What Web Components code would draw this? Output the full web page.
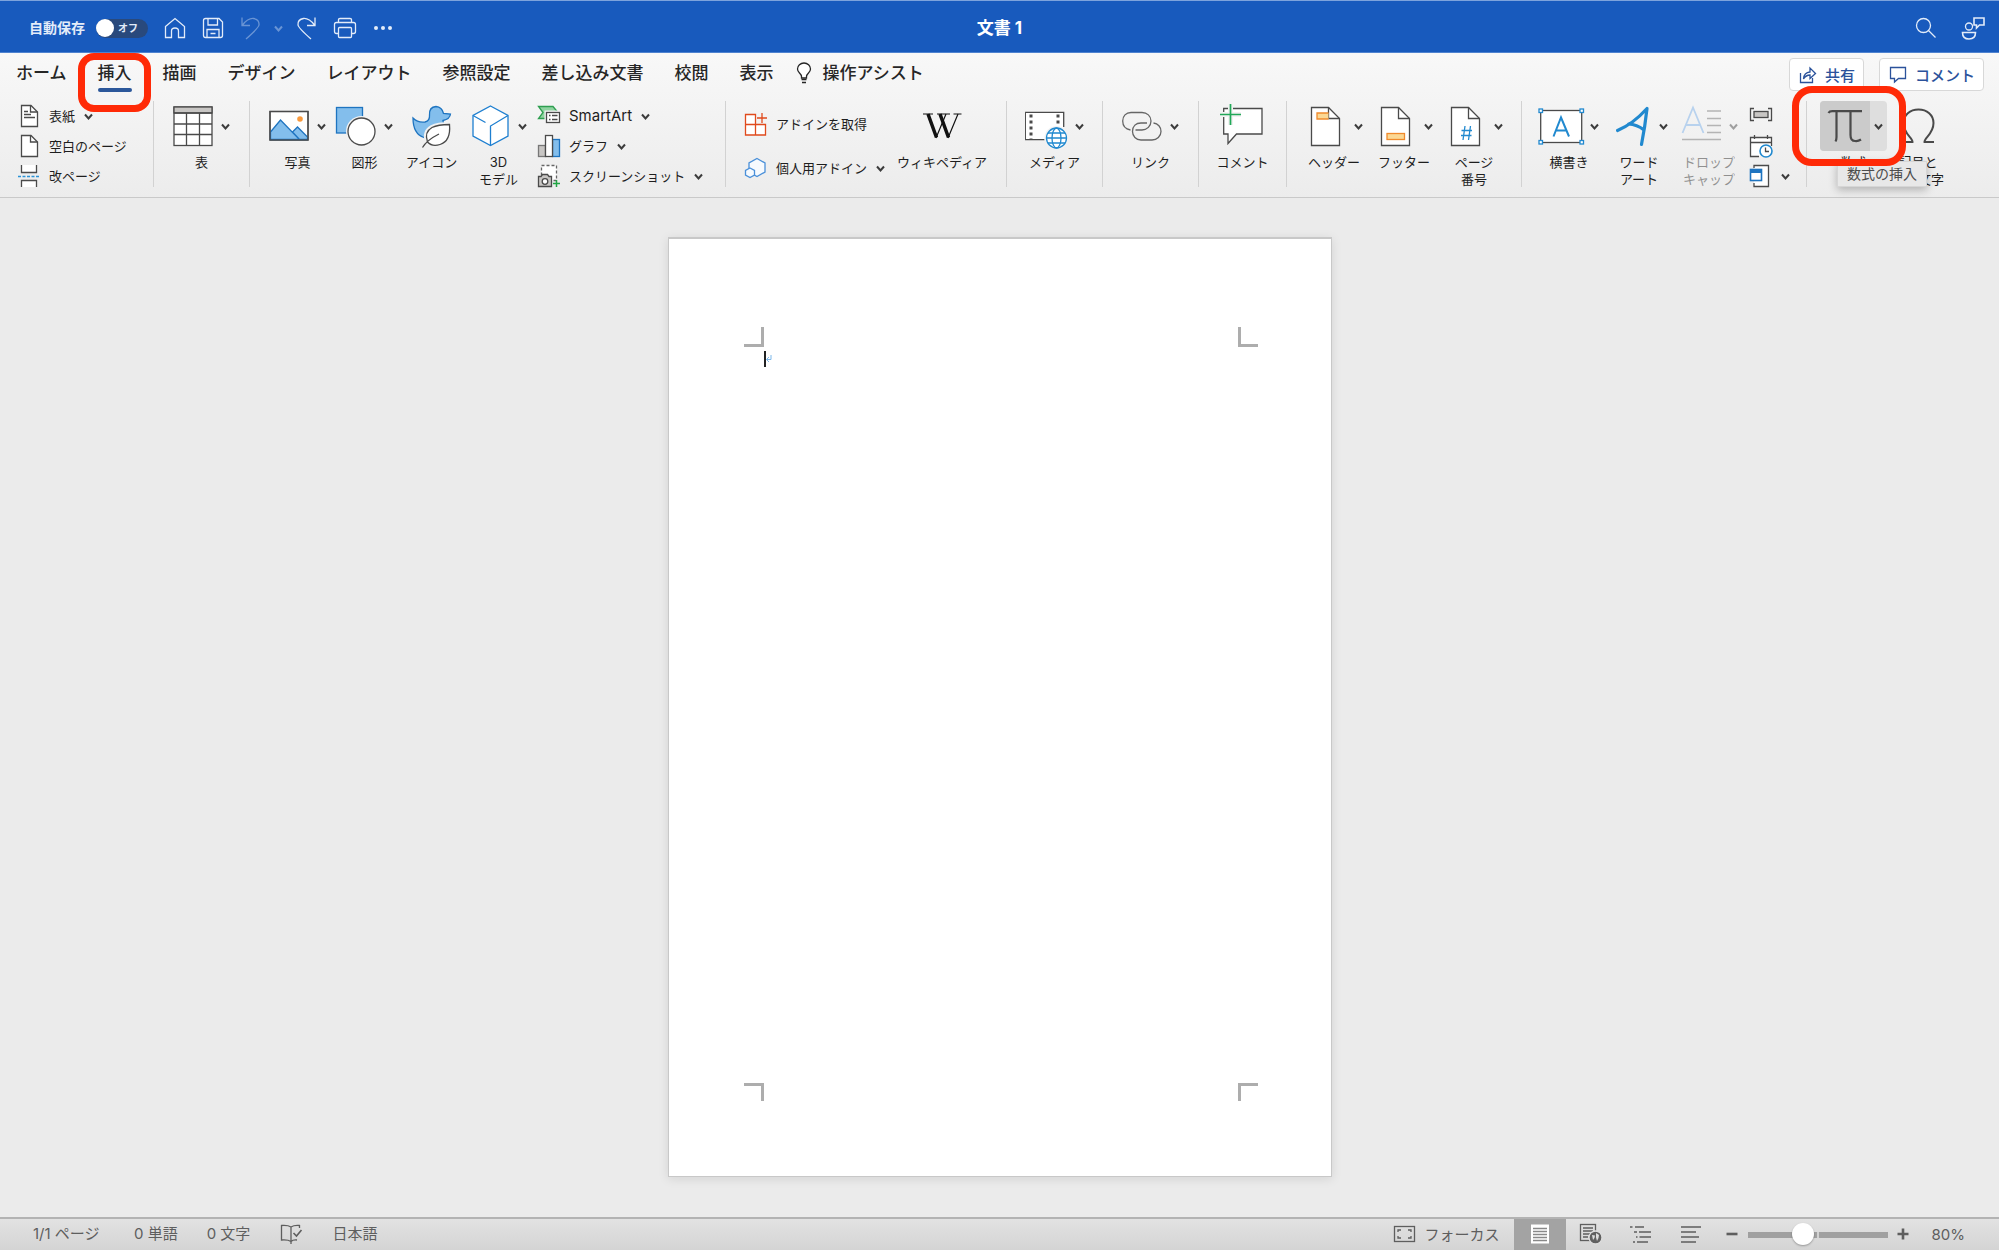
<!DOCTYPE html>
<html lang="ja">
<head>
<meta charset="utf-8">
<title>文書 1</title>
<style>
html,body{margin:0;height:100%}
body{font-family:Inter,"Noto Sans CJK JP",sans-serif;font-size:13px;color:#262626;background:#ebebeb}
</style>
</head>
<body>
<word-app></word-app>
<script>
const page='<path d="M5.5 2.5H22.5L33.5 13.5V40.5H5.5Z" fill="#fff" stroke="#4a4a4a"/><path d="M22.5 2.5V13.5H33.5" fill="none" stroke="#4a4a4a"/>';
const ICONS={
home:[22,22,'<path d="M1.500 9.500L11 1.500L20.500 9.500V20.500H14.500V14Q14.500 11 11 11Q7.500 11 7.500 14V20.500H1.500Z"/>'],
save:[22,22,'<path d="M3.500 1.500H17L20.500 5V18.500Q20.500 20.500 18.500 20.500H3.500Q1.500 20.500 1.500 18.500V3.500Q1.500 1.500 3.500 1.500Z"/><path d="M6 1.500V8H15.500V1.500M5 20.500V12.500H17V20.500M8.500 16.500H13.500"/>'],
undo:[22,24,'<path d="M2 1.500V9.500H10M2.500 9Q8 2 13.500 2.500Q19.500 3.500 19 9Q18.500 12 6 23"/>'],
redo:[22,24,'<path d="M20 1.500V9.500H12M19.500 9Q14 2 8.500 2.500Q2.500 3.500 3 9Q3.500 12 16 23"/>'],
print:[24,22,'<path d="M5.500 5.500V2.500Q5.500 1.500 7 1.500H17Q18.500 1.500 18.500 2.500V5.500M5.500 16.500H3.500Q1.500 16.500 1.500 14.500V7.500Q1.500 5.500 3.500 5.500H20.500Q22.500 5.500 22.500 7.500V14.500Q22.500 16.500 20.500 16.500H18.500"/><rect x="5.500" y="10.500" width="13" height="10" rx="1"/>'],
dots:[20,6,'<g fill="currentColor" stroke="none"><circle cx="3" cy="3" r="2"/><circle cx="10" cy="3" r="2"/><circle cx="17" cy="3" r="2"/></g>'],
search:[22,22,'<circle cx="8.500" cy="8.500" r="7"/><path d="M13.500 13.500L20.500 20.500"/>'],
people:[24,24,'<circle cx="8" cy="10.500" r="3.500"/><path d="M1.500 16.500H14.500Q14.500 23 8 23Q1.500 23 1.500 16.500ZM14 2H23V9H18.500L15.500 12V9H13V2Z" stroke-width="1.600"/>'],
chev:[9,9,'<path d="M1 2.500L4.500 6.500L8 2.500" stroke-width="2"/>'],
bulb:[16,22,'<path d="M5.500 16V14.500Q5.500 13 3.500 11Q1.500 9 1.500 7A6.500 6 0 0 1 14.500 7Q14.500 9 12.500 11Q10.500 13 10.500 14.500V16Z" fill="#fff" stroke-width="1.300"/><path d="M5.500 17.500H10.500M6 20.500H10" stroke-width="1.300"/>'],
share:[18,18,'<path d="M1.500 7V16.500H13.500V12M4.500 13Q5 6.500 11 6V2L16.500 7.500L11 12.500V9Q7 9 4.500 13Z"/>'],
bubble:[18,18,'<path d="M1.500 1.500H16.500V12.500H9.500L5.500 16V12.500H1.500Z"/>'],
cover:[24,24,'<path d="M4.500 1.500H14L20.500 8V22.500H4.500Z" fill="#fff"/><path d="M13.500 1.500V8H20.500M7 7.500H11M7 10.500H14M7 13.500H18"/>'],
blank:[24,24,'<path d="M4.500 1.500H14L20.500 8V22.500H4.500Z" fill="#fff"/><path d="M13.500 1.500V8H20.500"/>'],
brk:[24,24,'<path d="M4.500 1V8.500H19.500V1M4.500 23V16.500H19.500V23" fill="#fff"/><path d="M1 12.500H23" stroke="#2b93d6" stroke-dasharray="3 1.500" stroke-width="1.500"/>'],
table:[40,42,'<rect x="1" y="2" width="38" height="38.500" fill="#fff"/><rect x="1" y="2" width="38" height="6" fill="#c8c6c4"/><path d="M1 8H39M1 19H39M1 29.500H39M13.500 8V40M26.500 8V40"/>'],
photo:[40,42,'<rect x="1" y="6.500" width="38" height="28.500" fill="#fff"/><circle cx="31" cy="14" r="2.800" fill="#fa9a3c" stroke="none"/><path d="M1.500 27L11.500 15L30.500 34.500H1.500ZM23.500 27L28.500 22L38.500 32V34.500H30.500Z" fill="#83beec" stroke="#1e74c0" stroke-width="1.300"/><rect x="1" y="6.500" width="38" height="28.500"/>'],
shapes:[40,42,'<rect x=".5" y="2.500" width="26" height="25.500" fill="#83beec" stroke="#1e74c0"/><circle cx="25.500" cy="26.500" r="15.500" fill="#f2f2f2" stroke="none"/><circle cx="25.500" cy="26.500" r="13.500" fill="#fff"/>'],
duck:[40,42,'<path d="M1 13Q6 18 13 17Q18 16 17.500 10Q17 2 24 1.500Q30 2 31.500 8.500L38.500 9Q38 14 31 15.500Q33 22 27 28Q20 33 12 32.500Q1 29 1 13Z" fill="#83beec" stroke="#1e74c0" stroke-width="1.300"/><path d="M37.500 19.500Q39 36 28 39.500Q20 42 15.500 37Q12 27 20 22.500Q26 19.500 37.500 19.500Z" fill="#fff" stroke="#f2f2f2" stroke-width="5"/><path d="M37.500 19.500Q39 36 28 39.500Q20 42 15.500 37Q12 27 20 22.500Q26 19.500 37.500 19.500Z" fill="#fff"/><path d="M10.500 42.500Q15 35 27 29"/>'],
cube:[40,42,'<path d="M20.500 1L38 10.500V31L20.500 40.500L3 31V10.500Z" fill="#fff"/><path d="M3 10.500L15.500 17.500M38 10.500L20.500 21V40.500"/>'],
smart:[24,24,'<path d="M1.500 2.500H16L21 8.500L16 14.500H1.500L6 8.500Z" fill="#8fd3a0" stroke="#2e9e50"/><rect x="9.500" y="8.500" width="13" height="10" fill="#fff" stroke="#f2f2f2" stroke-width="4"/><rect x="9.500" y="8.500" width="13" height="10" fill="#fff"/><path d="M12 11.500H13.500M15 11.500H20.500M12 15.500H13.500M15 15.500H20.500"/>'],
chart:[24,24,'<rect x="1.500" y="11.500" width="7" height="11" fill="#c8c6c4" stroke="#777"/><rect x="15.500" y="5.500" width="7" height="17" fill="#83beec" stroke="#1e74c0"/><rect x="8.500" y="1.500" width="7" height="21" fill="#fff"/>'],
shot:[24,24,'<rect x="4.500" y="1.500" width="15" height="15" fill="#fff" stroke-dasharray="3 2" stroke="#666"/><path d="M1.500 12.500H4L5.500 10.500H10.500L12 12.500H14.500V22.500H1.500Z" fill="#c8c6c4"/><circle cx="8" cy="17.500" r="2.800" fill="#fff"/><path d="M19.500 16V23M16 19.500H23" stroke="#21a544" stroke-width="1.500"/>'],
addin:[24,24,'<path d="M1.500 2.500H11.500V12.500H21.500V23H1.500ZM1.500 12.500H11.500V23" fill="#fff"/><path d="M18 1V11M13 6H23"/>'],
mine:[24,24,'<path d="M13 2.500L21 7V16L13 20.500L5 16V7Z" fill="#f6fafe"/><path d="M6 12L10.500 14.500V19L6 21.500L1.500 19V14.500Z" fill="#f6fafe"/>'],
wiki:[40,42,'<g stroke="#111"><path d="M6 9L14.500 32.500M18 9L26.500 32.500" stroke-width="3.500"/><path d="M14 33L24 9M26 33L36 9" stroke-width="1.200"/><path d="M1 9H11M15 9H28M31.500 9H39.500" stroke-width="1"/></g>'],
media:[42,42,'<path d="M19.500 34.500H.7V7.500H38.700V22" fill="#fff"/><rect x="1" y="8" width="37" height="26" fill="#fff" stroke="none"/><path d="M6 9.500V34M33 9.500V19" stroke-dasharray="3 3" stroke-width="3"/><circle cx="31.500" cy="33" r="12" fill="#f2f2f2" stroke="none"/><g stroke="#2189cf"><circle cx="31.500" cy="33" r="10" fill="#fff"/><ellipse cx="31.500" cy="33" rx="4.500" ry="10"/><path d="M21.500 33H41.500M23 28H40M23 38H40"/></g>'],
link:[40,42,'<path d="M8.500 25C3 24 .7 20 .7 16C.7 11 4 7.500 9 7.500H20C25 7.500 29 11 29 16C29 21 25 25 20 25H13.500M25 18H19C14 18 10.500 21 10.500 26.500C10.500 31 14 35 19 35H30C35 35 39 31 39 26.500C39 22 36 18.500 31.500 18" stroke="#666"/>'],
note:[40,42,'<path d="M.7 3.500H39V29H13.500L5 38.500V29H.7Z" fill="#fff"/><path d="M-3 9.500H18M7.500 -1V20" stroke="#f2f2f2" stroke-width="5"/><path d="M-3 9.500H18M7.500 -1V20" stroke="#21a858" stroke-width="1.700"/>'],
header:[40,42,page+'<path d="M22.500 8H11V14H22.500" fill="#fbd894" stroke="#f08a2c"/>'],
footer:[40,42,page+'<rect x="11" y="28.500" width="17.500" height="6" fill="#fbd894" stroke="#f08a2c"/>'],
pageno:[40,42,page+'<path d="M19 21L17 35M24.500 21L22.500 35M15.500 25.500H26M15 30.500H25.500" stroke="#2189cf"/>'],
textbox:[42,42,'<rect x=".7" y="5.500" width="41" height="32" fill="#fff"/><path d="M13.500 31.500L21 12.500L29 31.500M16 25.500H26.500" stroke="#2189cf" stroke-width="2"/><g fill="#fff" stroke="#2189cf"><rect x="-1" y="4" width="3.500" height="3.500"/><rect x="40" y="4" width="3.500" height="3.500"/><rect x="-1" y="35.500" width="3.500" height="3.500"/><rect x="40" y="35.500" width="3.500" height="3.500"/></g>'],
wordart:[40,42,'<path d="M6.500 25.500Q22 19 36 3.500Q34 22 30.500 39.500M17.500 19Q26 19.500 33 25" stroke="#2189cf" stroke-width="3.200" stroke-linecap="round" stroke-linejoin="round"/>'],
dropcap:[40,42,'<path d="M1.500 28L12 2.500L22.500 28M5 20H19" stroke="#b8d2ee" stroke-width="1.800"/><path d="M26 6H40M26 13.500H40M26 20.500H40M26 27.500H40M1 34.500H40" stroke="#b4b4b4"/>'],
field:[24,24,'<path d="M5 4.500H1.500V16.500H5M19 4.500H22.500V16.500H19"/><rect x="5" y="7.500" width="14" height="6" fill="#c8c6c4"/>'],
date:[24,24,'<path d="M10 22.500H1.500V3.500H22.500V12" fill="#fff"/><path d="M1.500 8.500H22.500M5.500 1V5M18.500 1V5"/><circle cx="17" cy="17" r="6" fill="#fff" stroke="#2189cf" stroke-width="1.600"/><path d="M16.500 13.500V17.500H20"/>'],
object:[24,24,'<path d="M5 4V1.500H19.500V22.500H5V19" fill="#fff"/><rect x="1.500" y="5.500" width="11" height="11" fill="#fff" stroke="#1e74c0" stroke-width="1.600"/><path d="M1.500 7.500H12.500" stroke="#1e74c0" stroke-width="3"/>'],
pi:[50,50,'<path d="M8.500 12Q9.500 10 13 10.200H42M16.500 11V36Q16.500 39 15.500 40.500M30.500 11V34Q30.500 40 35 40Q38 40.500 41 38.500" stroke-width="2.200"/>'],
omega:[40,42,'<path d="M5.500 37H14.500C15 33 5.500 29 5.500 18C5.500 10 12 4.500 20.500 4.500C29 4.500 35.500 10 35.500 18C35.500 29 26 33 26.500 37H36" stroke-width="2"/>'],
book:[24,22,'<path d="M12 18V4Q9 2 2.500 2.500V17Q9 16.500 12 18.500Q14 16.500 18 17M12 4Q15 2 20.500 2.500V5M12 18V21" /><path d="M14.500 10L17.500 13L22.500 7" stroke-width="1.600"/>'],
focus:[24,18,'<rect x="1.500" y="1.500" width="20" height="15"/><path d="M5 7V5H8M15 5H18V7M18 11V13H15M8 13H5V11"/>'],
vprint:[20,20,'<rect x="1" y=".5" width="18" height="19" fill="#fff" stroke="none"/><path d="M3 4.500H17M3 7.500H17M3 10.500H17M3 13.500H17M3 16.500H17" stroke="#888"/>'],
vweb:[24,22,'<rect x="1.500" y="1.500" width="15" height="16"/><path d="M4 5H14M4 8H14M4 11H11M4 14H9" stroke-width="1.500"/><circle cx="16.500" cy="14.500" r="6.500" fill="#606060" stroke="#ddd"/><path d="M13 12L16 12.500L15.500 15L14 17ZM17 10L20 12L19.500 15L18 18L17 14.500Z" fill="#ddd" stroke="none"/>'],
vout:[24,20,'<path d="M1 3H3.500M6 3H15M5 8H8M10 8H22M7 13H8.500M10.500 13H22M4 18H6M8 18H19" stroke-width="1.600"/>'],
vdraft:[22,20,'<path d="M1 3H21M1 8H16M1 13H19M1 18H16" stroke-width="1.600"/>'],
minus:[12,12,'<path d="M.5 6H11.500" stroke-width="2.600"/>'],
plus:[12,12,'<path d="M.5 6H11.500M6 .5V11.500" stroke-width="2.600"/>']
};
const icon=(n)=>`<app-icon name="${n}"></app-icon>`;
const def=(tag,render)=>customElements.define(tag,class extends HTMLElement{
  constructor(){super();this.attachShadow({mode:'open'});}
  connectedCallback(){this.shadowRoot.innerHTML='<style>*,:host{box-sizing:border-box}button{font:inherit;color:inherit;background:none;border:0;padding:0;margin:0}</style>'+render(this);}
});

def('app-icon',el=>{const [w,h,b]=ICONS[el.getAttribute('name')];
return `<style>:host{display:inline-flex;flex:none}svg{display:block;overflow:visible}</style>
<svg width="${w}" height="${h}" viewBox="0 0 ${w} ${h}" fill="none" stroke="currentColor" stroke-width="1.300" aria-hidden="true">${b}</svg>`;});

def('mark-box',()=>`<style>:host{position:absolute;border:7px solid #ff2a07;pointer-events:none;z-index:3}</style>`);

def('title-bar',()=>`<style>
:host{display:grid;grid-template-columns:1fr auto 1fr;align-items:center;height:53px;padding:3px 14px 0;background:#185abd;border-top:1px solid #7da3dc;border-bottom:1px solid #4f83d0;color:#e3ecf9}
.l,.r,label{display:flex;align-items:center}
.l{gap:16px;padding-left:15px}.r{justify-content:flex-end;gap:24px}
button{display:flex}
label{gap:11px;font-size:14px;font-weight:700;line-height:20px}
.sw{position:relative;display:flex}
input{appearance:none;margin:0;width:52px;height:19px;border-radius:10px;background:#29497c}
input::before{content:"";display:block;width:18px;height:18px;border-radius:50%;background:#fff}
.sw span{position:absolute;left:22px;top:0;font-size:10px;line-height:19px;pointer-events:none}
h1{margin:0;font-size:17px;line-height:24px;font-weight:700;color:#fff}
.dim{opacity:.4}.c{margin:0 -4px}
</style>
<div class="l"><label>自動保存<span class="sw"><input type="checkbox" role="switch" aria-label="自動保存"><span>オフ</span></span></label>
<button aria-label="ホーム">${icon('home')}</button><button aria-label="保存">${icon('save')}</button><button class="dim" aria-label="元に戻す">${icon('undo')}</button><button class="dim c" aria-label="履歴">${icon('chev')}</button><button aria-label="やり直し">${icon('redo')}</button><button aria-label="印刷">${icon('print')}</button><button aria-label="その他">${icon('dots')}</button></div>
<h1>文書 1</h1>
<div class="r"><button aria-label="検索">${icon('search')}</button><button aria-label="共同編集">${icon('people')}</button></div>`);

def('ribbon-tab',el=>`<style>
:host{display:block;position:relative;font-size:17px;font-weight:500}
button{display:flex;align-items:center;gap:11px;line-height:26px;white-space:nowrap}
button::after{content:"";position:absolute;left:0;right:0;top:28px;height:4px;border-radius:2px;background:${el.hasAttribute('selected')?'#2b579a':'none'}}
mark-box{left:-20px;top:-7px;width:73px;height:59px;border-radius:16px}
</style><button role="tab"><slot></slot></button>${el.hasAttribute('marked')?'<mark-box></mark-box>':''}`);

def('side-button',()=>`<style>:host{display:block}
button{display:flex;align-items:center;gap:8px;height:33px;padding:0 8px 0 9px;background:#fff;border:1px solid #d8d8d8;border-radius:4px;color:#2b529b;font-size:15px;font-weight:500;white-space:nowrap}</style>
<button><slot></slot></button>`);

def('ribbon-tabs',()=>`<style>
:host{display:flex;align-items:flex-start;height:48px;padding:7px 15px 0 16px}
.tabs{display:flex;gap:31px}
.assist{margin-left:-9px}
.side{margin:-2px 0 0 auto;display:flex;gap:15px}
</style><div class="tabs" role="tablist">
<ribbon-tab>ホーム</ribbon-tab><ribbon-tab selected marked>挿入</ribbon-tab><ribbon-tab>描画</ribbon-tab><ribbon-tab>デザイン</ribbon-tab><ribbon-tab>レイアウト</ribbon-tab><ribbon-tab>参照設定</ribbon-tab><ribbon-tab>差し込み文書</ribbon-tab><ribbon-tab>校閲</ribbon-tab><ribbon-tab>表示</ribbon-tab>
<ribbon-tab class="assist">${icon('bulb')}操作アシスト</ribbon-tab></div>
<div class="side"><side-button>${icon('share')}共有</side-button><side-button>${icon('bubble')}コメント</side-button></div>`);

def('ribbon-group',()=>`<style>
:host{display:flex;flex:none;height:86px;border-right:1px solid #d2d2d2;justify-content:center}
:host([last]){border:0}
</style><slot></slot>`);

def('ribbon-button',el=>{const i=el.getAttribute('icon'),p=i=='pi';return `<style>
:host{display:block;flex:none;position:relative;width:var(--w,70px)}
button{display:flex;flex-direction:column;align-items:center;width:100%;white-space:nowrap}
.top{display:flex;align-items:center;justify-content:center;gap:8px;height:50px;margin-bottom:3px}
.pi{gap:0;background:#dedede;border-radius:4px;width:67px;justify-content:flex-start}
.pi app-icon:first-child{background:#cbcbcb;border-radius:4px 0 0 4px;margin-right:4px}
.lab{line-height:17px;color:#1e1e1e;text-align:center}
app-icon{color:${i=='cube'?'#1e7fd0':'#4a4a4a'}}
app-icon.c{color:#3c3c3c}
:host([disabled]) .lab,:host([disabled]) .c{opacity:.45}
mark-box{left:-28px;top:-15px;width:114px;height:80px;border-radius:20px}
.tip{position:absolute;left:17px;top:60px;z-index:2;padding:0 9px;line-height:24px;font-size:14px;color:#4c4c4c;background:#e8e8e8;border:1px solid #d6d6d6;box-shadow:0 3px 8px rgba(0,0,0,.25);white-space:nowrap}
</style><button>
<span class="top ${p?'pi':''}">${icon(i)}${el.hasAttribute('menu')?'<app-icon class="c" name="chev"></app-icon>':''}</span><span class="lab"><slot></slot></span></button>${p?'<span class="tip" role="tooltip">数式の挿入</span><mark-box></mark-box>':''}`;});

def('ribbon-row',el=>`<style>
:host{display:flex;flex:none;align-items:center;height:30px}
button{display:flex;align-items:center;gap:8px;white-space:nowrap;line-height:20px;color:#1e1e1e}
.t{display:flex;align-items:center;gap:9px}
app-icon{color:${{addin:'#e04a1c',mine:'#4a90d9'}[el.getAttribute('icon')]||'#4a4a4a'}}
app-icon.c{color:#3c3c3c}
</style><button aria-label="${el.getAttribute('label')||el.textContent}">${icon(el.getAttribute('icon'))}<span class="t"><slot></slot>${el.hasAttribute('menu')?'<app-icon class="c" name="chev"></app-icon>':''}</span></button>`);

def('ribbon-body',()=>`<style>
:host{display:flex;height:97px;border-bottom:1px solid #c9c9c9}
.g1{width:154px;padding-left:17px;justify-content:flex-start}
.g2{width:96px}.g7{width:88px}
.g3{--w:67px;width:476px;padding-left:14px;justify-content:flex-start}
.g4{--w:94px;width:281px;padding-left:18px;justify-content:flex-start}
.g8{width:235px}.g9{width:285px;padding-left:12px;justify-content:flex-start}
.g10{--w:67px;padding-left:13px}
.col{display:flex;flex-direction:column}
.c3{margin-left:5px}.c4{gap:14px;padding-top:8px;width:151px}
.sa{font-size:15px}.om{--w:58px;margin-left:2px}.pi{z-index:2}
</style>
<ribbon-group class="g1"><div class="col"><ribbon-row icon="cover" menu>表紙</ribbon-row><ribbon-row icon="blank">空白のページ</ribbon-row><ribbon-row icon="brk">改ページ</ribbon-row></div></ribbon-group>
<ribbon-group class="g2"><ribbon-button icon="table" menu>表</ribbon-button></ribbon-group>
<ribbon-group class="g3"><ribbon-button icon="photo" menu>写真</ribbon-button><ribbon-button icon="shapes" menu>図形</ribbon-button><ribbon-button icon="duck">アイコン</ribbon-button><ribbon-button icon="cube" menu>3D<br>モデル</ribbon-button>
<div class="col c3"><ribbon-row class="sa" icon="smart" menu>SmartArt</ribbon-row><ribbon-row icon="chart" menu>グラフ</ribbon-row><ribbon-row icon="shot" menu>スクリーンショット</ribbon-row></div></ribbon-group>
<ribbon-group class="g4"><div class="col c4"><ribbon-row icon="addin">アドインを取得</ribbon-row><ribbon-row icon="mine" menu>個人用アドイン</ribbon-row></div><ribbon-button icon="wiki">ウィキペディア</ribbon-button></ribbon-group>
<ribbon-group class="g2"><ribbon-button icon="media" menu>メディア</ribbon-button></ribbon-group>
<ribbon-group class="g2"><ribbon-button icon="link" menu>リンク</ribbon-button></ribbon-group>
<ribbon-group class="g7"><ribbon-button icon="note">コメント</ribbon-button></ribbon-group>
<ribbon-group class="g8"><ribbon-button icon="header" menu>ヘッダー</ribbon-button><ribbon-button icon="footer" menu>フッター</ribbon-button><ribbon-button icon="pageno" menu>ページ<br>番号</ribbon-button></ribbon-group>
<ribbon-group class="g9"><ribbon-button icon="textbox" menu>横書き</ribbon-button><ribbon-button icon="wordart" menu>ワード<br>アート</ribbon-button><ribbon-button icon="dropcap" menu disabled>ドロップ<br>キャップ</ribbon-button>
<div class="col c3"><ribbon-row icon="field" label="フィールド"></ribbon-row><ribbon-row icon="date" label="日付と時刻"></ribbon-row><ribbon-row icon="object" menu label="オブジェクト"></ribbon-row></div></ribbon-group>
<ribbon-group class="g10" last><ribbon-button class="pi" icon="pi" menu>数式</ribbon-button><ribbon-button class="om" icon="omega">記号と<br>特殊文字</ribbon-button></ribbon-group>`);

def('doc-page',()=>`<style>
:host{display:grid;width:664px;aspect-ratio:664/940;padding:88px 73px 75px 75px;background:#fff;border:1px solid #c8c8c8;border-top-width:2px;box-shadow:0 2px 10px rgba(0,0,0,.1);grid-template:20px 1fr 18px/20px 1fr 20px}
i{border:0 solid #adadad}
.a{border-width:0 3px 3px 0}.b{border-width:0 0 3px 3px;grid-column:3}
.c{border-width:3px 3px 0 0;grid-row:3}.d{border-width:3px 0 0 3px;grid-area:3/3}
.text{grid-column:2;padding-top:4px;display:flex;align-items:flex-start}
.caret{width:2px;height:16px;background:#222}
svg{margin-top:4px}
</style><i class="a"></i><i class="b"></i><div class="text" role="textbox"><span class="caret"></span><svg width="6" height="8" viewBox="0 0 6 8" fill="none" stroke="#7db8ea"><path d="M5 0V4.500H1M3 2L.5 4.500L3 7"/></svg></div><i class="c"></i><i class="d"></i>`);

def('status-bar',()=>`<style>
:host{display:flex;align-items:stretch;height:33px;border-top:2px solid #b3b3b3;background:linear-gradient(#e2e2e2,#d4d4d4);color:#5e5e5e;font-size:15px;line-height:29px;padding:0 34px 0 33px}
div,button,.z{display:flex;align-items:center;white-space:nowrap}
.l{gap:29px;padding-bottom:2px}.n{min-width:72px}
.r{margin-left:auto;align-items:stretch}
.r>*{padding-bottom:1px}
.f{gap:8px;margin-right:14px}
.v{width:52px;justify-content:center}.w{width:50px;justify-content:center}
.on{background:#a3a3a3}
.m{margin:0 10px 0 10px}.p{margin:0 23px 0 9px}
input{appearance:none;margin:0;align-self:center;width:140px;height:22px;background:linear-gradient(#d2d2d2,#d2d2d2) 69px 8px/2px 6px no-repeat,linear-gradient(#a0a0a0,#a0a0a0) 0 8px/100% 6px no-repeat;border-radius:3px}
input::-webkit-slider-thumb{appearance:none;width:22px;height:22px;border-radius:50%;background:#fff;box-shadow:0 1px 2px rgba(0,0,0,.3)}
</style><div class="l"><span class="n">1/1 ページ</span><span>0 単語</span><span>0 文字</span><button aria-label="校正">${icon('book')}</button><span>日本語</span></div>
<div class="r"><button class="f">${icon('focus')}フォーカス</button><button class="v on" aria-label="印刷レイアウト">${icon('vprint')}</button><button class="w" aria-label="Web レイアウト">${icon('vweb')}</button><button class="w" aria-label="アウトライン">${icon('vout')}</button><button class="w" aria-label="下書き">${icon('vdraft')}</button>
<button class="m" aria-label="縮小">${icon('minus')}</button><input type="range" min="0" max="100" value="38" aria-label="ズーム"><button class="p" aria-label="拡大">${icon('plus')}</button><span class="z">80%</span></div>`);

def('word-app',()=>`<style>
:host{display:flex;flex-direction:column;height:100vh;overflow:hidden}
header{background:linear-gradient(#f8f8f8,#f2f2f2 50%,#ececec)}
main{flex:1;min-height:0;display:flex;justify-content:center;align-items:flex-start;padding-top:39px}
</style><title-bar></title-bar><header><ribbon-tabs></ribbon-tabs><ribbon-body></ribbon-body></header><main><doc-page></doc-page></main><status-bar></status-bar>`);
</script>
</body>
</html>
